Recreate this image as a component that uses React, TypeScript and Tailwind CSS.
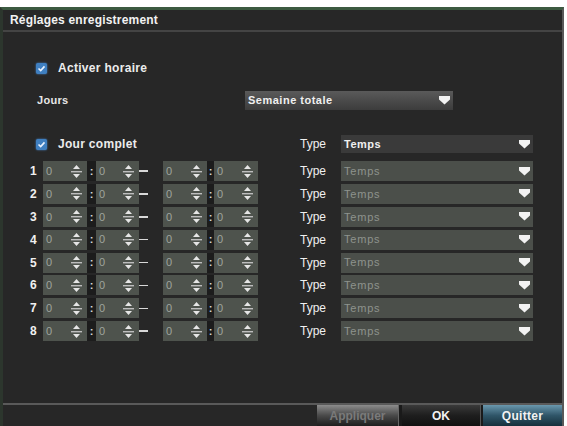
const font = { fontFamily: '"Liberation Sans", Arial, sans-serif' }

function Check() {
  return (
    <span className="w-[11px] h-[11px] rounded-[2px] bg-[#3f7fc0] flex items-center justify-center shadow-[0_0_2px_#4a8ad0]">
      <svg width="9" height="9" viewBox="0 0 9 9">
        <path d="M1.5 4.5 L3.7 6.6 L7.5 2.4" stroke="#e8f2ff" strokeWidth="1.6" fill="none" />
      </svg>
    </span>
  )
}

function DropArrow() {
  return (
    <svg width="11" height="9" viewBox="0 0 11 9">
      <polygon points="0,0 11,0 11,3.5 5.5,8.5 0,3.5" fill="#f2f2f2" />
    </svg>
  )
}

function SpinArrows() {
  return (
    <svg width="13" height="17" viewBox="0 0 13 17">
      <polygon points="3,6 6.5,2 10,6" fill="#e6e6e6" />
      <rect x="1" y="8" width="11" height="1.4" fill="#bdbdbd" />
      <polygon points="3,11 6.5,15 10,11" fill="#e6e6e6" />
    </svg>
  )
}

function Spinner({ w }: { w: string }) {
  return (
    <div className={`${w} h-full bg-[#4e534d] flex items-center justify-between pl-[3px] pr-[4px]`}>
      <span className="text-[11px] text-[#9ea49d]">0</span>
      <SpinArrows />
    </div>
  )
}

export default function App() {
  const rows = [1, 2, 3, 4, 5, 6, 7, 8]
  return (
    <div className="w-[567px] h-[426px] bg-white flex flex-col pt-[7px] overflow-hidden" style={font}>
      <div className="flex-1 mr-[3px] bg-[#272727] border-t-[3px] border-t-[#3c5a40] border-l-[3px] border-l-[#2c362d] border-r-2 border-r-[#585858] flex flex-col">
        <div className="h-[22px] flex items-center pl-[7px] border-b-2 border-[#444]">
          <span className="text-[12px] font-bold text-[#f2f2f2] tracking-[0.2px]">Réglages enregistrement</span>
        </div>

        <div className="mt-[28px] h-[16px] pl-[33px] flex items-center gap-[11px]">
          <Check />
          <span className="text-[12px] font-bold text-[#ececec] tracking-[0.3px]">Activer horaire</span>
        </div>

        <div className="mt-[15px] h-[19px] pl-[34px] flex items-center">
          <span className="w-[208px] text-[11px] font-bold text-[#e6e6e6] tracking-[0.3px]">Jours</span>
          <div className="w-[208px] h-full bg-gradient-to-b from-[#5a5a5a] to-[#3c3c3c] flex items-center justify-between pl-[3px] pr-[3px]">
            <span className="text-[11px] font-bold text-[#f0f0f0] tracking-[0.5px]">Semaine totale</span>
            <DropArrow />
          </div>
        </div>

        <div className="mt-[25px] h-[18px] pl-[33px] flex items-center">
          <div className="w-[264px] flex items-center gap-[11px]">
            <Check />
            <span className="text-[12px] font-bold text-[#ececec] tracking-[0.3px]">Jour complet</span>
          </div>
          <span className="w-[41px] text-[12px] text-[#f0f0f0]">Type</span>
          <div className="w-[192px] h-full bg-[#3a3a3a] flex items-center justify-between pl-[3px] pr-[3px]">
            <span className="text-[11px] font-bold text-[#f0f0f0] tracking-[0.5px]">Temps</span>
            <DropArrow />
          </div>
        </div>

        <div className="mt-[8px] flex flex-col gap-[2.9px]">
          {rows.map((n) => (
            <div key={n} className="h-[20px] pl-[27px] flex items-center">
              <span className="w-[13px] text-[12px] font-bold text-[#f0f0f0]">{n}</span>
              <Spinner w="w-[44px]" />
              <span className="w-[9px] h-full bg-[#1c1c1c] flex items-center justify-center text-[11px] font-bold text-[#d8d8d8]">:</span>
              <Spinner w="w-[43px]" />
              <div className="w-[24px] flex items-center">
                <span className="w-[9px] h-[1.5px] bg-[#d8d8d8]" />
              </div>
              <Spinner w="w-[44px]" />
              <span className="w-[7px] h-full bg-[#1c1c1c] flex items-center justify-center text-[11px] font-bold text-[#d8d8d8]">:</span>
              <Spinner w="w-[44px]" />
              <span className="w-[42px]" />
              <span className="w-[41px] text-[12px] text-[#f0f0f0]">Type</span>
              <div className="w-[192px] h-full bg-[#4b4f4a] flex items-center justify-between pl-[3px] pr-[3px]">
                <span className="text-[11px] text-[#8e938d] tracking-[0.8px]">Temps</span>
                <DropArrow />
              </div>
            </div>
          ))}
        </div>

        <div className="flex-1" />

        <div className="h-[23px] border-t-2 border-[#5a5a5a] flex justify-end items-end">
          <div className="w-[81px] h-[21px] bg-gradient-to-b from-[#8c8c8c] via-[#4a4a4a] to-[#1e1e1e] flex items-center justify-center">
            <span className="text-[12px] font-bold text-[#7a7a7a]">Appliquer</span>
          </div>
          <span className="w-[4px] h-[21px] bg-[#1a1a1a] border-l border-[#666]" />
          <div className="w-[78px] h-[21px] bg-gradient-to-b from-[#3a3a3a] via-[#1e1e1e] to-[#111] flex items-center justify-center">
            <span className="text-[12px] font-bold text-[#f2f2f2]">OK</span>
          </div>
          <span className="w-[3px] h-[21px] bg-[#1a1a1a] border-l border-[#555]" />
          <div className="w-[79px] h-[21px] bg-gradient-to-b from-[#6a98ae] via-[#2f5568] to-[#16303c] flex items-center justify-center">
            <span className="text-[12px] font-bold text-[#f2f2f2] tracking-[0.3px]">Quitter</span>
          </div>
        </div>
      </div>
    </div>
  )
}
